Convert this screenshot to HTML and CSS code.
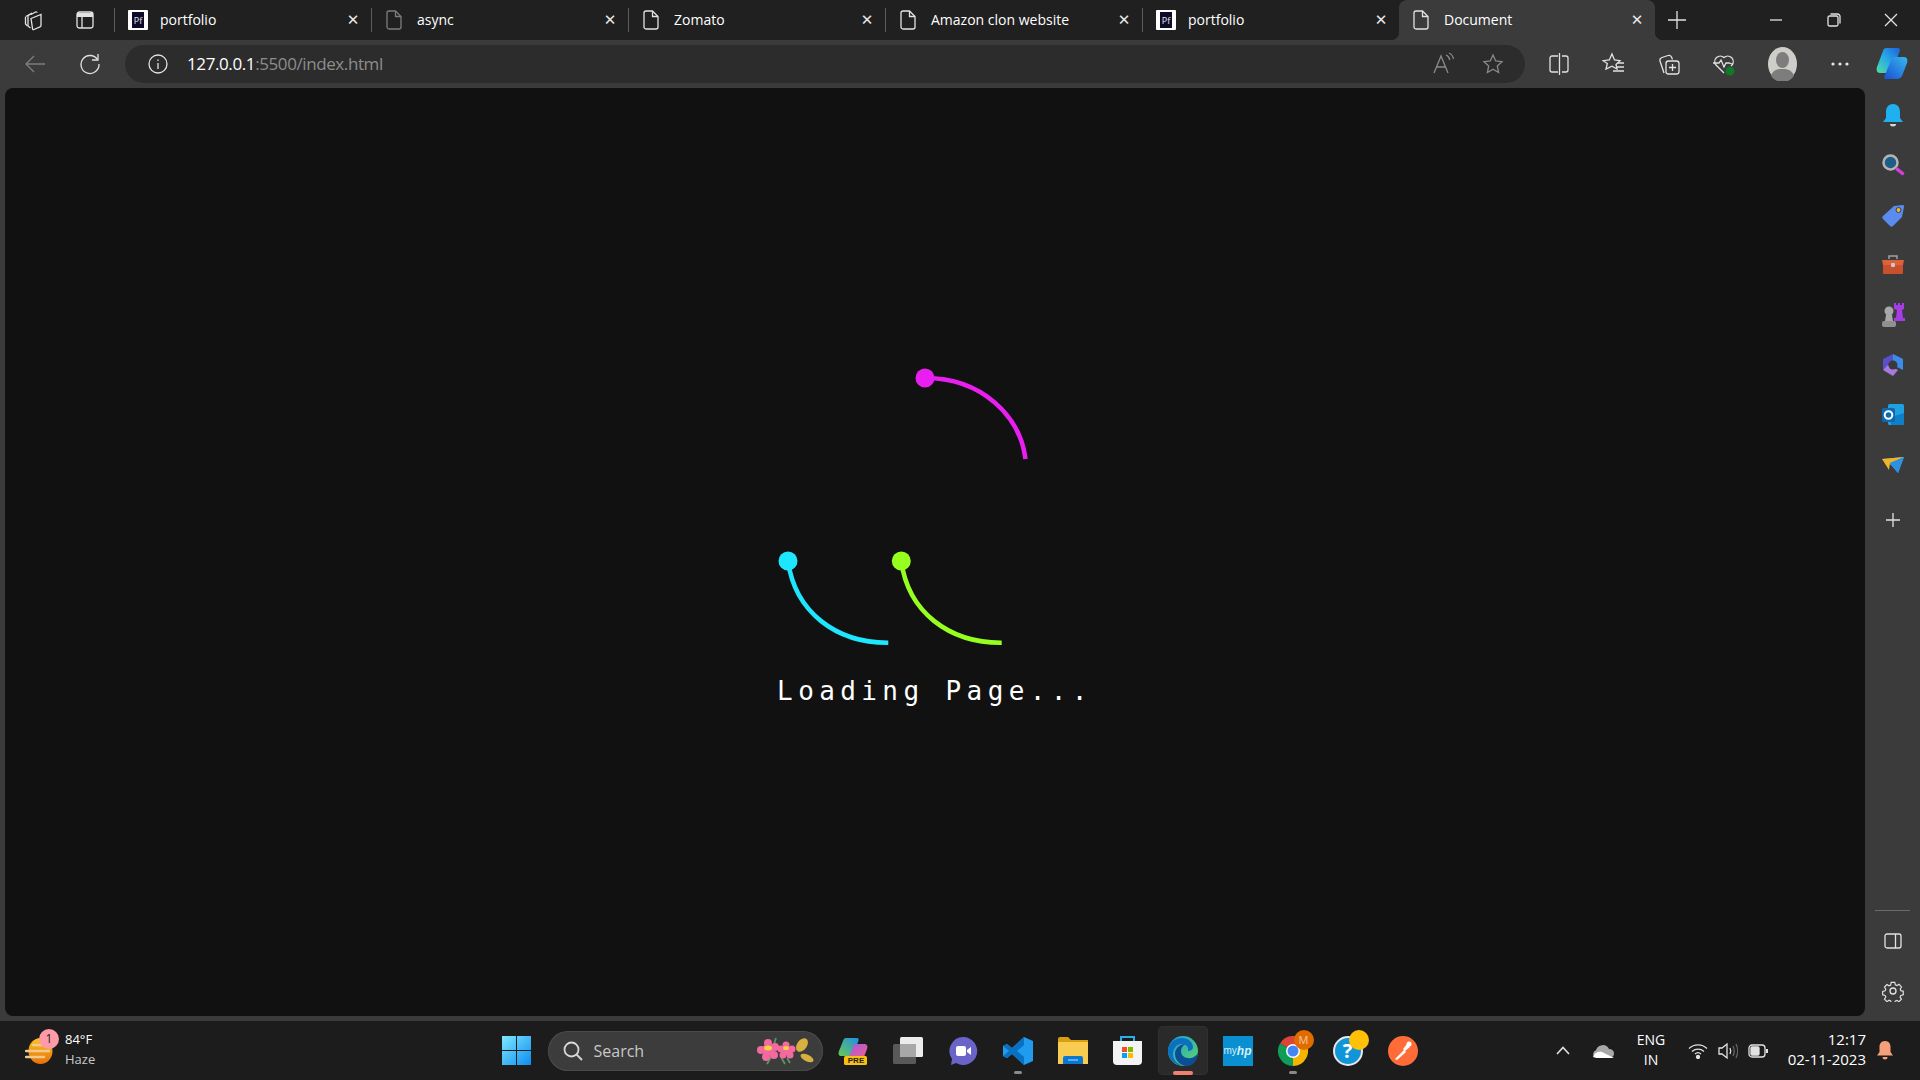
FILE: index.html
```html
<!doctype html>
<html lang="en">
  <head>
    <meta charset="UTF-8" />
    <title>Document</title>
    <link rel="stylesheet" href="styles.css">
  </head>
  <body>
    <div class="tabstrip">
      <div class="strip-btn">
        <svg class="line" width="22" height="22" viewBox="0 0 22 22"><path d="M8 5.500 12.500 3a1 1 0 0 1 1.500.8"/><path d="M5 8V6.500L9 4"/><path d="M2.500 7.500 8 5"/><path d="M8 9.500l10-4v11a1.500 1.500 0 0 1-1 1.400l-6 2.600a1 1 0 0 1-1.500-1L8 9.500Z"/><path d="M5 8v9l2.500 2"/><path d="M2.500 8v7l2 2"/></svg>
      </div>
      <div class="strip-btn">
        <svg class="line" width="20" height="20" viewBox="0 0 20 20"><rect x="2" y="2" width="16" height="16" rx="2.500"/><path d="M2 5h16" stroke-width="4"/><path d="M7 7v11"/></svg>
      </div>
      <div class="tabs">
        <span class="sep"></span>
        <div class="tab"><span class="favicon"><b>Pf</b></span><span class="tab-title">portfolio</span><span class="tab-close">&#x2715;</span></div>
        <span class="sep"></span>
        <div class="tab"><span class="tab-icon dim"><svg class="line" width="16" height="20" viewBox="0 0 16 20"><path d="M3 1h6.500L15 6.500V17a2 2 0 0 1-2 2H3a2 2 0 0 1-2-2V3a2 2 0 0 1 2-2Z"/><path d="M9.500 1v5.500H15"/></svg></span><span class="tab-title">async</span><span class="tab-close">&#x2715;</span></div>
        <span class="sep"></span>
        <div class="tab"><span class="tab-icon"><svg class="line" width="16" height="20" viewBox="0 0 16 20"><path d="M3 1h6.500L15 6.500V17a2 2 0 0 1-2 2H3a2 2 0 0 1-2-2V3a2 2 0 0 1 2-2Z"/><path d="M9.500 1v5.500H15"/></svg></span><span class="tab-title">Zomato</span><span class="tab-close">&#x2715;</span></div>
        <span class="sep"></span>
        <div class="tab"><span class="tab-icon"><svg class="line" width="16" height="20" viewBox="0 0 16 20"><path d="M3 1h6.500L15 6.500V17a2 2 0 0 1-2 2H3a2 2 0 0 1-2-2V3a2 2 0 0 1 2-2Z"/><path d="M9.500 1v5.500H15"/></svg></span><span class="tab-title">Amazon clon website</span><span class="tab-close">&#x2715;</span></div>
        <span class="sep"></span>
        <div class="tab"><span class="favicon"><b>Pf</b></span><span class="tab-title">portfolio</span><span class="tab-close">&#x2715;</span></div>
        <span class="sep sep-off"></span>
        <div class="tab tab-active"><span class="tab-icon"><svg class="line" width="16" height="20" viewBox="0 0 16 20"><path d="M3 1h6.500L15 6.500V17a2 2 0 0 1-2 2H3a2 2 0 0 1-2-2V3a2 2 0 0 1 2-2Z"/><path d="M9.500 1v5.500H15"/></svg></span><span class="tab-title">Document</span><span class="tab-close">&#x2715;</span></div>
      </div>
      <div class="new-tab">
        <svg class="line" width="20" height="20" viewBox="0 0 20 20"><path d="M10 1v18M1 10h18"/></svg>
      </div>
      <div class="window-controls">
        <div class="win-btn"><svg class="line" width="14" height="14" viewBox="0 0 14 14"><path d="M1 7h12"/></svg></div>
        <div class="win-btn"><svg class="line" width="14" height="14" viewBox="0 0 14 14"><rect x="1" y="3" width="10" height="10" rx="1.500"/><path d="M3.500 1h7A2.500 2.500 0 0 1 13 3.500v7"/></svg></div>
        <div class="win-btn"><svg class="line" width="14" height="14" viewBox="0 0 14 14"><path d="M1 1l12 12M13 1 1 13"/></svg></div>
      </div>
    </div>

    <div class="toolbar">
      <div class="tool tool-off"><svg class="line" width="22" height="22" viewBox="0 0 22 22"><path d="M21 11H2M10 3l-8 8 8 8"/></svg></div>
      <div class="tool"><svg class="line" width="22" height="22" viewBox="0 0 22 22"><path d="M18.500 6.500A9 9 0 1 0 20 11"/><path d="M19 1v6h-6"/></svg></div>
      <div class="address">
        <svg class="line" width="22" height="22" viewBox="0 0 22 22"><circle cx="11" cy="11" r="9"/><path d="M11 10v6"/><path d="M11 6.500v1.500"/></svg>
        <span class="url"><span class="url-host">127.0.0.1</span>:5500/index.html</span>
        <div class="address-end">
          <svg class="line dim" width="24" height="24" viewBox="0 0 24 24"><path d="M2 21 9 4l7 17M4.500 15h9"/><path d="M14 3c2 .8 3.300 2.500 3.800 5M17 1c2.500 1 4 3.500 4.500 6"/></svg>
          <svg class="line dim" width="22" height="22" viewBox="0 0 22 22"><path d="m11 2 2.700 6 6.300.7-4.700 4.300 1.300 6.500L11 16.200 5.400 19.500 6.700 13 2 8.700 8.300 8Z"/></svg>
        </div>
      </div>
      <div class="tool tool-first"><svg class="line" width="22" height="22" viewBox="0 0 22 22"><path d="M10 3H4a2 2 0 0 0-2 2v12a2 2 0 0 0 2 2h6M14 3h4a2 2 0 0 1 2 2v12a2 2 0 0 1-2 2h-4"/><path d="M11.500 0v22"/></svg></div>
      <div class="tool"><svg class="line" width="24" height="24" viewBox="0 0 24 24"><path d="m10 2 2.500 6 5.500.7-4 3.800 1 4.500-5-2.800L4 17l1.300-5.500L1 8.700 7.300 8Z"/><path d="M16 11h6M15 15h7M11 19h11"/></svg></div>
      <div class="tool"><svg class="line" width="24" height="24" viewBox="0 0 24 24"><path d="M7 21 3 9a3 3 0 0 1 2-3.500l6-2a3 3 0 0 1 3.500 1.500l1 2.500"/><rect x="9" y="9" width="13" height="13" rx="2.500"/><path d="M15.500 12v7M12 15.500h7"/></svg></div>
      <div class="tool tool-health"><svg class="line" width="24" height="24" viewBox="0 0 24 24"><path d="M12 21 4 13a5.500 5.500 0 0 1 8-7.500A5.500 5.500 0 0 1 20 13l-1 1"/><path d="M1 11h6l2-3 3 7 2-4h3l3 1"/><circle class="health-dot" cx="18" cy="19" r="3.800"/></svg></div>
      <div class="tool tool-avatar"><svg width="29" height="34" viewBox="0 0 29 34"><ellipse cx="14.500" cy="17" rx="14.500" ry="17" fill="#cfcdc9"/><ellipse cx="14.500" cy="13" rx="6.500" ry="8" fill="#7d7d7d"/><path d="M3 29c2-6 6-7 11.500-7S24 23 26 29a15 17 0 0 1-23 0Z" fill="#7d7d7d"/></svg></div>
      <div class="tool tool-more"><svg width="20" height="6" viewBox="0 0 20 6"><circle cx="3" cy="3" r="1.600" fill="#e8e8e8"/><circle cx="10" cy="3" r="1.600" fill="#e8e8e8"/><circle cx="17" cy="3" r="1.600" fill="#e8e8e8"/></svg></div>
      <div class="tool tool-copilot"><svg width="32" height="32" viewBox="0 0 32 32"><defs><linearGradient id="cpA" x1="0" y1="1" x2="1" y2="0"><stop offset="0" stop-color="#4fe0a0"/><stop offset=".5" stop-color="#27a8e8"/><stop offset="1" stop-color="#1e60d8"/></linearGradient><linearGradient id="cpB" x1="0" y1="1" x2="1" y2="0"><stop offset="0" stop-color="#1a4fd0"/><stop offset="1" stop-color="#35b8f0"/></linearGradient></defs><path d="M10 0h12c3 0 2 3 1 5l-7 18c-1 2-3 2-4 2H4c-3 0-4-3-3-6L7 3c.6-2 1.500-3 3-3Z" fill="url(#cpA)"/><path d="M18 9h10c3 0 4 3 3 6l-5 13c-1 2-3 3-5 3H10c-3 0-2-2-1-4l6-15c.6-2 1.500-3 3-3Z" fill="url(#cpB)"/></svg></div>
    </div>

    <div class="workspace">
      <main class="page">
        <svg class="spinners" width="340" height="282" viewBox="765 368 340 282">
          <path class="arc" stroke="#e81ff0" d="M925 378C982 378 1020 416 1025.500 459"/>
          <circle cx="925" cy="378" r="9.500" fill="#e81ff0"/>
          <path class="arc" stroke="#1fe6ff" d="M788 561C795 612 836 643 888.300 642.700"/>
          <circle cx="788" cy="561" r="9.500" fill="#1fe6ff"/>
          <path class="arc" stroke="#96ff1f" d="M901.300 561C908 612 949 643 1001.700 642.700"/>
          <circle cx="901.300" cy="561" r="9.500" fill="#96ff1f"/>
        </svg>
        <p class="loading-text">Loading Page...</p>
      </main>

      <aside class="sidebar">
        <div class="side-btn"><svg width="24" height="24" viewBox="0 0 24 24"><path d="M12 1c5 0 7 4 7 8v6l3 4H2l3-4V9c0-4 2-8 7-8Z" fill="#1fb0f0"/><path d="M9 21h6a3 2.500 0 0 1-6 0Z" fill="#cfd8dc"/></svg></div>
        <div class="side-btn"><svg width="24" height="24" viewBox="0 0 24 24"><circle cx="9.500" cy="9.500" r="7" fill="#1c5e86" stroke="#b4b4b4" stroke-width="2.500"/><path d="m16 16 5.500 4.500" stroke="#d83cd8" stroke-width="3.500" stroke-linecap="round"/></svg></div>
        <div class="side-btn"><svg width="24" height="24" viewBox="0 0 24 24"><path d="M2 13 13 3l9-1c1 0 1 1 1 2l-2 10-9 9c-1 1-2 1-3 0l-7-7c-1-1-1-2 0-3Z" fill="#5a8cf0"/><circle cx="17.500" cy="7" r="2.500" fill="#e8b820" stroke="#3a3a60"/></svg></div>
        <div class="side-btn"><svg width="24" height="24" viewBox="0 0 24 24"><path d="M8 6V3h8v3" fill="none" stroke="#a0a0a0" stroke-width="1.500"/><path d="M1 7h22l-1 5H2Z" fill="#e0603a"/><path d="M2 12h20v8a1 1 0 0 1-1 1H3a1 1 0 0 1-1-1Z" fill="#c8502c"/><rect x="10" y="10" width="4" height="4" rx="1" fill="#c8c8c8"/></svg></div>
        <div class="side-btn"><svg width="24" height="26" viewBox="0 0 24 26"><circle cx="8" cy="9" r="4.500" fill="#a8a8a8"/><path d="M5 13h6l1 6H4Z" fill="#a8a8a8"/><rect x="1" y="19" width="14" height="6" rx="2" fill="#909090"/><path d="M13 1h2v2h2V1h2v2h2V1h2v6l-2 1 1 8h2v3H13v-3h2l1-8-3-1Z" fill="#a63ce8"/></svg></div>
        <div class="side-btn"><svg width="24" height="24" viewBox="0 0 24 24"><path d="M12 1 22 6v11L12 12Z" fill="#3a8ce8"/><path d="M2 6 12 1v7L7 11v6l-5-1Z" fill="#5a4fc8"/><path d="M2 17l5-5 10 5-5 6Z" fill="#a87ae0"/><circle cx="12" cy="12" r="4.500" fill="#3a3a3a"/></svg></div>
        <div class="side-btn"><svg width="24" height="24" viewBox="0 0 24 24"><rect x="7" y="1" width="16" height="21" rx="1.500" fill="#20a0e0"/><path d="M10 14 23 10v12H10Z" fill="#0f80c8"/><rect x="1" y="5" width="13" height="14" rx="1.500" fill="#0c68b0"/><circle cx="7.500" cy="12" r="3.800" fill="none" stroke="#fff" stroke-width="2"/></svg></div>
        <div class="side-btn"><svg width="24" height="18" viewBox="0 0 24 18"><path d="M1 3 23 1 17 17 10 9Z" fill="#34a8e8"/><path d="M1 3 23 1 9 7 8 14Z" fill="#f0b428"/><path d="M23 1 9 7 17 17Z" fill="#2e90e0"/></svg></div>
        <div class="side-btn side-plus"><svg class="line" width="16" height="16" viewBox="0 0 16 16"><path d="M8 1v14M1 8h14"/></svg></div>
        <div class="side-bottom">
          <hr class="side-rule" />
          <div class="side-btn"><svg class="line" width="18" height="16" viewBox="0 0 18 16"><rect x="1" y="1" width="16" height="14" rx="2"/><path d="M11.500 1v14"/></svg></div>
          <div class="side-btn"><svg class="line" width="22" height="22" viewBox="0 0 22 22"><circle cx="11" cy="11" r="3"/><path d="M9 1.500h4l.6 2.700 1.800.8 2.400-1.400 2.700 2.900-1.500 2.300.7 1.800 2.700.7v4l-2.700.7-.8 1.800 1.500 2.300-2.800 2.800-2.300-1.500-1.800.8-.6 2.500H9l-.6-2.600-1.800-.8-2.300 1.500-2.800-2.800 1.500-2.300-.8-1.800-2.700-.6v-3.800l2.700-.7.8-1.800-1.500-2.300 2.800-2.800 2.300 1.400 1.800-.8Z" transform="translate(1.100 1.100) scale(.9)"/></svg></div>
        </div>
      </aside>
    </div>

    <footer class="taskbar">
      <div class="weather">
        <div class="weather-icon">
          <svg width="30" height="26" viewBox="0 0 30 26"><defs><linearGradient id="sun" x1="0" y1="0" x2="0" y2="1"><stop offset="0" stop-color="#ffc31f"/><stop offset="1" stop-color="#e8700a"/></linearGradient></defs><ellipse cx="15.500" cy="13" rx="12" ry="13" fill="url(#sun)"/><path d="M8 7h22M1 13h23M1 19h18" stroke="#eccb8c" stroke-width="2.500" stroke-linecap="round"/></svg>
          <span class="weather-badge">1</span>
        </div>
        <div class="weather-text"><span>84°F</span><span class="weather-sub">Haze</span></div>
      </div>

      <div class="task-slot">
        <svg width="29" height="29" viewBox="0 0 29 29"><defs><linearGradient id="win" x1="0" y1="0" x2="1" y2="1"><stop offset="0" stop-color="#7fe8ff"/><stop offset="1" stop-color="#0c8cf0"/></linearGradient></defs><path d="M0 0h14v14H0ZM15 0h14v14H15ZM0 15h14v14H0ZM15 15h14v14H15Z" fill="url(#win)"/></svg>
      </div>
      <div class="search">
        <svg class="line search-glass" width="20" height="20" viewBox="0 0 20 20"><circle cx="8.500" cy="8.500" r="7"/><path d="m13.500 13.500 5.500 5.500"/></svg>
        <span class="search-label">Search</span>
        <svg class="search-art" width="58" height="28" viewBox="0 0 58 28">
          <path d="M17 7 19 1M14 20l-4 7M24 20l4 7M30 21l3 5" stroke="#5c9460" stroke-width="1.800"/>
          <g fill="#f4699f">
            <circle cx="11" cy="6" r="4"/><circle cx="18" cy="10" r="4"/><circle cx="17" cy="18" r="4"/><circle cx="9" cy="20" r="4"/><circle cx="4" cy="13" r="4"/><circle cx="11" cy="13" r="6"/>
            <circle cx="29" cy="8" r="3.500"/><circle cx="35" cy="12" r="3.500"/><circle cx="33" cy="18" r="3.500"/><circle cx="26" cy="18" r="3.500"/><circle cx="24" cy="12" r="3.500"/><circle cx="29" cy="13" r="5"/>
          </g>
          <ellipse cx="11" cy="11" rx="4" ry="2.500" fill="#f8d040"/>
          <ellipse cx="29" cy="11" rx="3" ry="2" fill="#f8d040"/>
          <ellipse cx="45" cy="8" rx="5" ry="7.500" transform="rotate(35 45 8)" fill="#d8b040"/>
          <ellipse cx="50" cy="21" rx="7" ry="3.200" transform="rotate(25 50 21)" fill="#d8b040"/>
        </svg>
      </div>
      <div class="task-slots">
        <div class="task-slot">
          <svg width="30" height="28" viewBox="0 0 30 28"><defs><linearGradient id="preA" x1="0" y1="1" x2="1" y2="0"><stop offset="0" stop-color="#6ac850"/><stop offset="1" stop-color="#1e90e8"/></linearGradient><linearGradient id="preB" x1="0" y1="0" x2="1" y2="1"><stop offset="0" stop-color="#a05ae0"/><stop offset="1" stop-color="#f06090"/></linearGradient></defs><path d="M8 1h11c2 0 2 2 1 4l-6 14H3c-2 0-3-2-2-5L5 4c.6-2 1.500-3 3-3Z" fill="url(#preA)"/><path d="M17 7h9c3 0 4 2 3 5l-3 8H11l4-10c.6-2 1-3 2-3Z" fill="url(#preB)"/><rect x="6" y="19" width="23" height="9" rx="1.500" fill="#f8c010"/></svg>
          <span class="pre-label">PRE</span>
        </div>
        <div class="task-slot">
          <svg width="30" height="27" viewBox="0 0 30 27"><rect x="7" y="0" width="23" height="20" rx="1.500" fill="#ececec"/><rect x="0" y="7" width="23" height="20" rx="1.500" fill="#5e5e5e" opacity=".92"/><rect x="7" y="7" width="16" height="13" fill="#a8a8a8"/></svg>
        </div>
        <div class="task-slot">
          <svg width="30" height="30" viewBox="0 0 30 30"><path d="M15 1a14 14 0 1 1-7 26l-5 2 1-6A14 14 0 0 1 15 1Z" fill="#6a64c8"/><rect x="8" y="10" width="10" height="10" rx="2" fill="#fff"/><path d="m19 14 4-3v8l-4-3Z" fill="#fff"/></svg>
        </div>
        <div class="task-slot task-open">
          <svg width="30" height="30" viewBox="0 0 30 30"><path d="M21 1 30 5v20l-9 4-12-11-5 4-4-2V10l4-2 5 4Z" fill="#1f9cf0"/><path d="M21 1 9 12 4 8 0 10l6 5-6 5 4 2 5-4L21 29Zm0 8v12l-7-6Z" fill="#0a70c0"/></svg>
        </div>
        <div class="task-slot">
          <svg width="30" height="27" viewBox="0 0 30 27"><path d="M0 2a2 2 0 0 1 2-2h8l3 3h17v5H0Z" fill="#d8a010"/><path d="M0 5h30v22H0Z" fill="#f8cc50"/><path d="M5 27v-6a2 2 0 0 1 2-2h16a2 2 0 0 1 2 2v6Z" fill="#0a78d0"/><path d="M10 23h10" stroke="#7ac0f0" stroke-width="1.500"/></svg>
        </div>
        <div class="task-slot">
          <svg width="29" height="29" viewBox="0 0 29 29"><path d="M8 7V1h13v6" fill="none" stroke="#28b0e8" stroke-width="2"/><path d="M0 5h29v20a4 4 0 0 1-4 4H4a4 4 0 0 1-4-4Z" fill="#f4f4f4"/><rect x="9" y="11" width="5" height="5" fill="#f25022"/><rect x="15" y="11" width="5" height="5" fill="#7fba00"/><rect x="9" y="17" width="5" height="5" fill="#00a4ef"/><rect x="15" y="17" width="5" height="5" fill="#ffb900"/></svg>
        </div>
        <div class="task-slot task-active">
          <svg width="30" height="30" viewBox="0 0 30 30"><defs><linearGradient id="edgeA" x1="0" y1="0" x2="1" y2="1"><stop offset="0" stop-color="#1a9ce0"/><stop offset="1" stop-color="#5ed860"/></linearGradient></defs><circle cx="15" cy="15" r="15" fill="url(#edgeA)"/><path d="M0 15C0 6 8 2 14 2c7 0 11 5 11 9 0 3-3 4-5 4 1-4-2-7-6-7-6 0-9 5-9 10 0 6 5 11 11 12C7 30 0 23 0 15Z" fill="#0c70c0"/><path d="M30 17c-2 3-6 6-10 5-4 0-7-3-7-7 0-3 2-6 5-7-6 0-11 4-11 10 0 6 5 12 12 12 6 0 10-5 11-13Z" fill="#0c4e96"/></svg>
        </div>
        <div class="task-slot">
          <span class="myhp">my<i>hp</i></span>
        </div>
        <div class="task-slot task-open">
          <svg width="30" height="30" viewBox="0 0 30 30"><path d="M15 15 2 7.500A15 15 0 0 1 28 7.500Z" fill="#db4437"/><path d="M15 15 28 7.500A15 15 0 0 1 15 30Z" fill="#f4b400"/><path d="M15 15 15 30A15 15 0 0 1 2 7.500Z" fill="#0f9d58"/><circle cx="15" cy="15" r="7" fill="#fff"/><circle cx="15" cy="15" r="5.500" fill="#4285f4"/></svg>
          <span class="task-badge badge-orange">M</span>
        </div>
        <div class="task-slot">
          <span class="help">?</span>
          <span class="task-badge badge-yellow"></span>
        </div>
        <div class="task-slot">
          <svg width="30" height="30" viewBox="0 0 30 30"><circle cx="15" cy="15" r="15" fill="#ff6c37"/><path d="m7 23 9-9 2 2-9 8ZM15 13l4-5 3 3-5 4Z" fill="#fff"/><circle cx="21" cy="8" r="2.500" fill="#fff"/></svg>
        </div>
      </div>

      <div class="tray">
        <div class="tray-slot tray-wide"><svg class="line" width="14" height="9" viewBox="0 0 14 9"><path d="m1 8 6-6.500L13 8" stroke-width="1.600"/></svg></div>
        <div class="tray-slot tray-wide"><svg width="21" height="14" viewBox="0 0 21 14"><path d="M4 14a4 4 0 0 1-1-7.800A7 7 0 0 1 16 5a4.500 4.500 0 0 1 1 9Z" fill="#a8a8a8"/><path d="M0 13c1-4 5-6 9-5l12 6H4Z" fill="#fff"/></svg></div>
        <div class="lang"><span>ENG</span><span>IN</span></div>
        <div class="tray-slot"><svg class="line" width="20" height="16" viewBox="0 0 20 16"><path d="M1 5.500a13 13 0 0 1 18 0M4 8.500a9 9 0 0 1 12 0M7 11a4.500 4.500 0 0 1 6 0"/><circle class="wifi-dot" cx="10" cy="14" r="1.500"/></svg></div>
        <div class="tray-slot"><svg class="line" width="20" height="18" viewBox="0 0 20 18"><path d="M1 6h3l5-4v14l-5-4H1Z"/><path d="M12 6c1 2 1 4 0 6"/><path class="vol-dim" d="M15 4c1.500 3 1.500 7 0 10M18 2c2 4 2 10 0 14"/></svg></div>
        <div class="tray-slot"><svg class="line" width="20" height="14" viewBox="0 0 20 14"><rect x="1" y="1" width="16" height="12" rx="3"/><rect class="bat-fill" x="3" y="3" width="8" height="8" rx="1"/><path d="M19 5v4" stroke-width="2"/></svg></div>
        <div class="clock"><span>12:17</span><span>02-11-2023</span></div>
        <div class="tray-slot"><svg width="16" height="19" viewBox="0 0 16 19"><path d="M8 0c4 0 5.500 3 5.500 6v5l2.500 3.500H0L2.500 11V6C2.500 3 4 0 8 0Z" fill="#f5a07a"/><path d="M5.500 16h5a2.500 2.500 0 0 1-5 0Z" fill="#f5a07a"/></svg></div>
      </div>
    </footer>
  </body>
</html>
```

FILE: styles.css
```css
:root {
  --strip-bg: #202020;
  --chrome-bg: #3b3b3b;
  --address-bg: #2c2c2c;
  --page-bg: #111111;
  --taskbar-bg: #1c1c1c;
  --icon-color: #e2e2e2;
}

* {
  box-sizing: border-box;
}

body {
  margin: 0;
  width: 1920px;
  height: 1080px;
  overflow: hidden;
  display: flex;
  flex-direction: column;
  background: var(--chrome-bg);
  color: #fff;
  font-family: "Open Sans", "Noto Sans", sans-serif;
}

.line {
  fill: none;
  stroke: currentColor;
  stroke-width: 1.3;
  color: var(--icon-color);
}

.line.dim {
  color: #8a8a8a;
}

/* tab strip */
.tabstrip {
  height: 40px;
  display: flex;
  align-items: center;
  padding-left: 8px;
  background: var(--strip-bg);
}

.strip-btn {
  width: 51px;
  display: flex;
  justify-content: center;
}

.tabs {
  display: flex;
  align-items: center;
  height: 40px;
  margin-left: 4px;
}

.sep {
  width: 1px;
  height: 24px;
  background: #5c5c5c;
}

.sep-off {
  background: transparent;
}

.tab {
  position: relative;
  width: 256px;
  height: 40px;
  display: flex;
  align-items: center;
  padding-left: 13px;
  font-size: 14px;
}

.tab-active {
  background: var(--chrome-bg);
  border-radius: 8px 8px 0 0;
  margin-left: -1px;
}

.tab-active::before,
.tab-active::after {
  content: "";
  position: absolute;
  bottom: 0;
  width: 8px;
  height: 8px;
}

.tab-active::before {
  left: -8px;
  background: radial-gradient(circle at 0 0, transparent 8px, var(--chrome-bg) 8.5px);
}

.tab-active::after {
  right: -8px;
  background: radial-gradient(circle at 100% 0, transparent 8px, var(--chrome-bg) 8.5px);
}

.favicon {
  width: 20px;
  height: 20px;
  margin-right: 12px;
  display: flex;
  align-items: center;
  justify-content: center;
  border: solid #fff;
  border-width: 2px 4px;
  background: #0c0c28;
  border-radius: 1px;
}

.favicon b {
  font-size: 9px;
  font-weight: 400;
  color: #e8e8e8;
}

.tab-icon {
  width: 16px;
  height: 20px;
  margin-left: 1px;
  margin-right: 15px;
  display: flex;
}

.tab-icon.dim .line {
  color: #7c7c7c;
}

.tab-title {
  flex: 1;
  padding-bottom: 2px;
  white-space: nowrap;
}

.tab-close {
  width: 16px;
  margin-right: 10px;
  font-size: 15px;
  line-height: 1;
  text-align: center;
  font-family: "DejaVu Sans", sans-serif;
  color: #e8e8e8;
}

.new-tab {
  width: 44px;
  display: flex;
  justify-content: center;
}

.window-controls {
  display: flex;
  margin-left: auto;
}

.win-btn {
  width: 57.5px;
  display: flex;
  justify-content: center;
}

/* toolbar */
.toolbar {
  height: 48px;
  display: flex;
  align-items: center;
  padding-left: 7px;
  background: var(--chrome-bg);
}

.tool {
  width: 55px;
  display: flex;
  justify-content: center;
}

.tool-off .line {
  color: #7e7e7e;
}

.address {
  width: 1400px;
  height: 38px;
  margin-left: 8px;
  margin-right: 6px;
  display: flex;
  align-items: center;
  gap: 18px;
  padding: 0 21px 0 22px;
  border-radius: 19px;
  background: var(--address-bg);
}

.url {
  padding-bottom: 2px;
  font-size: 17px;
  letter-spacing: -0.4px;
  color: #8d8d8d;
}

.url-host {
  color: #fff;
}

.address-end {
  margin-left: auto;
  display: flex;
  align-items: center;
  gap: 26px;
}

.health-dot {
  fill: #0f7a28;
  stroke: #0f7a28;
}

.tool-avatar {
  margin-left: 4px;
}

.tool-more {
  margin-left: 2px;
}

.tool-copilot {
  width: 50px;
}

/* page area */
.workspace {
  height: 928px;
  display: flex;
  padding-left: 5px;
}

.page {
  width: 1860px;
  display: flex;
  flex-direction: column;
  align-items: center;
  padding-top: 280px;
  background: var(--page-bg);
  border-radius: 8px;
}

.spinners {
  display: block;
}

.arc {
  fill: none;
  stroke-width: 4.600;
}

.loading-text {
  margin: 26px 0 0;
  font-family: "DejaVu Sans Mono", monospace;
  font-size: 26px;
  line-height: 30px;
  letter-spacing: 5.4px;
  color: #fff;
}

/* edge sidebar */
.sidebar {
  width: 55px;
  display: flex;
  flex-direction: column;
  align-items: center;
  padding-top: 2px;
}

.side-btn {
  width: 55px;
  height: 50px;
  flex: none;
  display: flex;
  align-items: center;
  justify-content: center;
}

.side-plus {
  margin-top: 5px;
}

.side-bottom {
  margin-top: auto;
  display: flex;
  flex-direction: column;
  align-items: center;
}

.side-rule {
  width: 35px;
  margin: 0 0 5px;
  border: 0;
  border-top: 1px solid #6a6a6a;
}

/* windows taskbar */
.taskbar {
  height: 59px;
  margin-top: 5px;
  display: flex;
  align-items: center;
  background: var(--taskbar-bg);
}

.weather {
  width: 491.5px;
  display: flex;
  align-items: center;
  padding-left: 25px;
}

.weather-icon {
  position: relative;
  width: 30px;
  height: 26px;
  margin-right: 10px;
}

.weather-badge {
  position: absolute;
  top: -9px;
  right: -4px;
  width: 20px;
  height: 20px;
  border-radius: 50%;
  background: #ff9aa8;
  color: #1c1c1c;
  font-size: 12px;
  line-height: 20px;
  text-align: center;
}

.weather-text {
  display: flex;
  flex-direction: column;
  padding-bottom: 4px;
  font-size: 13px;
  line-height: 20px;
}

.weather-sub {
  color: #c8c8c8;
}

.task-slots {
  display: flex;
  gap: 5px;
  margin-left: 5px;
}

.task-slot {
  position: relative;
  width: 50px;
  height: 49px;
  display: flex;
  align-items: center;
  justify-content: center;
  border-radius: 5px;
}

.task-open::after,
.task-active::after {
  content: "";
  position: absolute;
  left: 50%;
  bottom: 1px;
  width: 8px;
  height: 3px;
  margin-left: -4px;
  border-radius: 2px;
  background: #8a8a8a;
}

.task-active {
  background: #2a2a2a;
  box-shadow: inset 0 0 0 1px #303030;
}

.task-active::after {
  width: 20px;
  height: 4px;
  margin-left: -10px;
  bottom: 0;
  background: #f08070;
}

.search {
  width: 275px;
  height: 40px;
  margin-left: 6px;
  display: flex;
  align-items: center;
  padding: 0 8px 0 15px;
  border-radius: 20px;
  background: #3c3c3c;
  box-shadow: inset 0 0 0 1px #4a4a4a;
}

.search-glass {
  color: #d8d8d8;
  stroke-width: 1.8;
}

.search-label {
  margin-left: 11px;
  font-size: 16px;
  color: #c8c8c8;
}

.search-art {
  margin-left: auto;
}

.pre-label {
  position: absolute;
  right: 10px;
  bottom: 10px;
  width: 23px;
  font-size: 8px;
  font-weight: 700;
  line-height: 9px;
  text-align: center;
  font-family: "Liberation Sans", sans-serif;
  color: #1c1c1c;
}

.myhp {
  width: 30px;
  height: 30px;
  display: flex;
  align-items: center;
  justify-content: center;
  background: #0a8fd0;
  color: #d8f0fa;
  font-size: 10px;
  font-family: "Liberation Sans", sans-serif;
}

.myhp i {
  font-size: 12px;
  font-weight: 700;
}

.task-badge {
  position: absolute;
  top: 4px;
  right: 4px;
  width: 20px;
  height: 20px;
  border-radius: 50%;
  font-size: 11px;
  line-height: 20px;
  text-align: center;
}

.badge-orange {
  background: #e06c00;
  color: #f4c8a0;
}

.badge-yellow {
  background: #ffc107;
}

.help {
  width: 30px;
  height: 30px;
  border: 2px solid #e8e8e8;
  border-radius: 50%;
  background: #1096d8;
  color: #fff;
  font-size: 20px;
  font-weight: 700;
  line-height: 26px;
  text-align: center;
}

.tray {
  margin-left: auto;
  padding-right: 20px;
  display: flex;
  align-items: center;
  font-size: 14px;
}

.tray-slot {
  width: 30px;
  display: flex;
  justify-content: center;
}

.tray-wide {
  width: 40px;
}

.wifi-dot {
  fill: currentColor;
}

.vol-dim {
  stroke: #666;
}

.bat-fill {
  fill: currentColor;
}

.lang {
  width: 60px;
  padding-right: 4px;
  padding-bottom: 2px;
  display: flex;
  flex-direction: column;
  align-items: center;
  line-height: 20px;
}

.clock {
  width: 93px;
  margin-right: 4px;
  padding-bottom: 3px;
  display: flex;
  flex-direction: column;
  align-items: flex-end;
  font-size: 15px;
  line-height: 20px;
}
```
